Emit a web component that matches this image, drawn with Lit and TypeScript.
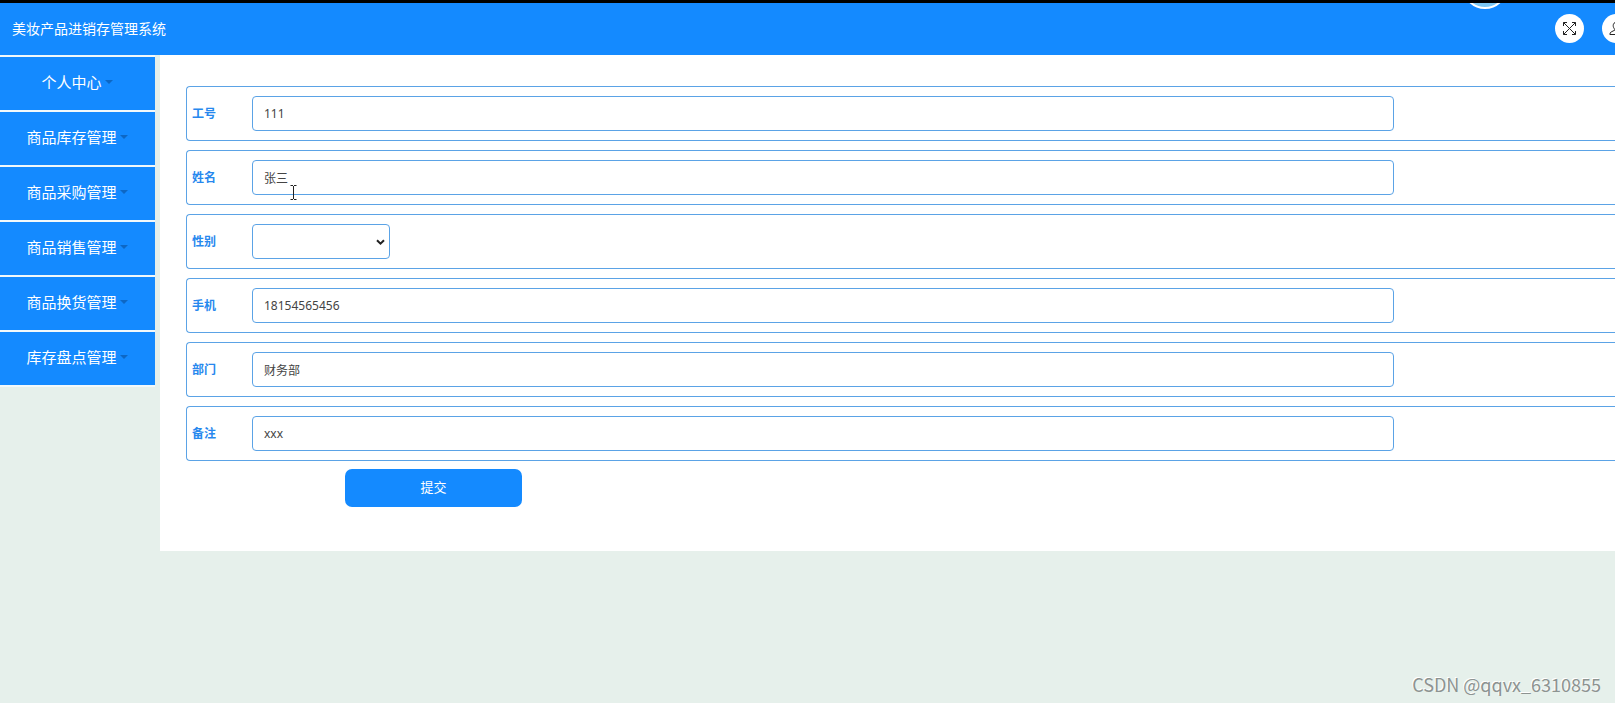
import { LitElement, html, css, svg } from "lit";
import { customElement, property } from "lit/decorators.js";

const FONT = css`"Noto Sans", "Noto Sans CJK SC", sans-serif`;

interface Field {
  id: string;
  label: string;
  value: string;
  kind: "text" | "select";
}

const MENU = ["个人中心", "商品库存管理", "商品采购管理", "商品销售管理", "商品换货管理", "库存盘点管理"];

const FIELDS: Field[] = [
  { id: "number", label: "工号", value: "111", kind: "text" },
  { id: "name", label: "姓名", value: "张三", kind: "text" },
  { id: "gender", label: "性别", value: "", kind: "select" },
  { id: "phone", label: "手机", value: "18154565456", kind: "text" },
  { id: "department", label: "部门", value: "财务部", kind: "text" },
  { id: "remark", label: "备注", value: "xxx", kind: "text" },
];

@customElement("app-header")
export class AppHeader extends LitElement {
  static styles = css`
    :host {
      display: block;
      border-top: 3px solid #000;
      background: #148aff;
      color: #fff;
      font-family: ${FONT};
    }
    .bar {
      position: relative;
      display: flex;
      align-items: center;
      justify-content: space-between;
      height: 52px;
      padding-left: 12px;
      overflow: hidden;
    }
    .title {
      margin: 0;
      font-size: 14px;
      line-height: 20px;
      font-weight: 400;
    }
    .tools {
      display: flex;
      gap: 18px;
      margin-right: -16px;
      padding-bottom: 2px;
    }
    .tool {
      display: grid;
      place-items: center;
      width: 29px;
      height: 29px;
      padding: 0;
      border: 0;
      border-radius: 50%;
      background: #fff;
      color: #222;
    }
    .avatar {
      position: absolute;
      right: 107px;
      top: -40px;
      width: 46px;
      height: 46px;
      box-sizing: border-box;
      border: 2px solid #fff;
      border-radius: 50%;
      background: #7cc8f5;
    }
    svg {
      display: block;
      fill: none;
      stroke: currentColor;
    }
  `;

  render() {
    return html`
      <header class="bar">
        <h1 class="title">美妆产品进销存管理系统</h1>
        <span class="avatar"></span>
        <div class="tools">
          <button class="tool" type="button" aria-label="全屏">
            <svg width="15" height="15" viewBox="0 0 15 15">
              ${svg`<path d="M1.5 5V1.5H5M10 1.5H13.5V5M13.5 10V13.5H10M5 13.5H1.5V10M1.5 1.5L13.5 13.5M13.5 1.5L1.5 13.5" />`}
            </svg>
          </button>
          <button class="tool" type="button" aria-label="用户">
            <svg width="15" height="15" viewBox="0 0 15 15">
              ${svg`<path d="M7.5 1.2C5.3 1.2 4.2 2.8 4.2 4.6C4.2 6 4.9 7.4 5.8 8.2V9.2L2.2 10.9C1.3 11.4 .9 12.3 .9 13.5H14.1C14.1 12.3 13.7 11.4 12.8 10.9L9.2 9.2V8.2C10.1 7.4 10.8 6 10.8 4.6C10.8 2.8 9.7 1.2 7.5 1.2Z" />`}
            </svg>
          </button>
        </div>
      </header>
    `;
  }
}

@customElement("side-menu")
export class SideMenu extends LitElement {
  static styles = css`
    :host {
      display: block;
      font-family: ${FONT};
    }
    .item {
      display: flex;
      align-items: center;
      justify-content: center;
      gap: 3px;
      width: 100%;
      height: 55px;
      padding: 0 1px 3px 0;
      border: 0;
      border-bottom: 2px solid #f2f9fb;
      background: #148aff;
      color: #fff;
      font-family: inherit;
      font-size: 15px;
      line-height: 20px;
    }
    .caret {
      border: 4px solid transparent;
      border-top-color: #0d67c4;
      border-bottom: 0;
    }
  `;

  @property({ attribute: false }) items: string[] = [];

  render() {
    return html`<nav>
      ${this.items.map(
        (text) => html`<button class="item" type="button">${text}<span class="caret"></span></button>`
      )}
    </nav>`;
  }
}

@customElement("profile-form")
export class ProfileForm extends LitElement {
  static styles = css`
    :host {
      display: block;
      padding: 31px 0 44px 26px;
      background: #fff;
      font-family: ${FONT};
      font-size: 12px;
      line-height: 18px;
    }
    .form {
      margin: 0;
    }
    .rows {
      display: flex;
      flex-direction: column;
      gap: 9px;
      margin-bottom: 8px;
    }
    .row {
      display: flex;
      align-items: center;
      height: 55px;
      box-sizing: border-box;
      border: 1px solid #5ba3e6;
      border-right: 0;
      border-radius: 4px 0 0 4px;
    }
    .label {
      flex: none;
      width: 65px;
      padding-left: 5px;
      box-sizing: border-box;
      color: #2788ee;
      font-weight: 700;
    }
    .control {
      height: 35px;
      box-sizing: border-box;
      border: 1px solid #5ba3e6;
      border-radius: 4px;
      padding: 0 11px;
      background: #fff;
      color: #444;
      font: inherit;
      outline: 0;
    }
    .text {
      flex: 0 0 80%;
      min-width: 0;
    }
    .choice {
      position: relative;
      display: flex;
    }
    .select {
      width: 138px;
      appearance: none;
    }
    .arrow {
      position: absolute;
      right: 5px;
      top: 15px;
      fill: none;
      stroke: #222;
      stroke-width: 2;
      pointer-events: none;
    }
    .submit {
      display: block;
      width: 177px;
      height: 38px;
      margin-left: 159px;
      padding: 0 0 2px;
      border: 0;
      border-radius: 7px;
      background: #148aff;
      color: #fff;
      font: inherit;
      font-size: 13px;
    }
    .cursor {
      position: absolute;
      left: 289px;
      top: 185px;
      fill: none;
      stroke: #222;
      pointer-events: none;
    }
  `;

  @property({ attribute: false }) fields: Field[] = [];

  private control(field: Field) {
    if (field.kind === "select") {
      return html`<span class="choice">
        <select class="control select" id=${field.id}>
          <option value=""></option>
          <option>男</option>
          <option>女</option>
        </select>
        <svg class="arrow" width="9" height="7" viewBox="0 0 9 7"><path d="M1 1.2L4.5 4.7L8 1.2" /></svg>
      </span>`;
    }
    return html`<input class="control text" type="text" id=${field.id} .value=${field.value} />`;
  }

  render() {
    return html`
      <form class="form" @submit=${(e: Event) => e.preventDefault()}>
        <div class="rows">
          ${this.fields.map(
            (field) => html`<div class="row">
              <label class="label" for=${field.id}>${field.label}</label>
              ${this.control(field)}
            </div>`
          )}
        </div>
        <button class="submit" type="submit">提交</button>
      </form>
      <svg class="cursor" width="9" height="15" viewBox="0 0 9 15">
        <path d="M1.5 .5H4M5 .5H7.5M4.5 1V14M1.5 14.5H4M5 14.5H7.5" />
      </svg>
    `;
  }
}

@customElement("app-root")
export class AppRoot extends LitElement {
  static styles = css`
    :host {
      display: block;
      position: relative;
      min-height: 100vh;
      overflow: hidden;
      background: #e6f0eb;
    }
    .layout {
      display: grid;
      grid-template-columns: 155px minmax(0, 1fr);
      column-gap: 5px;
      align-items: start;
    }
    .menu {
      border-top: 2px solid #f2f9fb;
    }
    .watermark {
      position: absolute;
      right: 14px;
      bottom: 7px;
      color: #8d9391;
      font-family: "Noto Sans CJK SC", sans-serif;
      font-size: 18px;
      font-weight: 400;
      line-height: 24px;
      text-shadow: -1px -1px 0 #fff;
    }
  `;

  render() {
    return html`
      <app-header></app-header>
      <main class="layout">
        <side-menu class="menu" .items=${MENU}></side-menu>
        <profile-form .fields=${FIELDS}></profile-form>
      </main>
      <span class="watermark">CSDN @qqvx_6310855</span>
    `;
  }
}
